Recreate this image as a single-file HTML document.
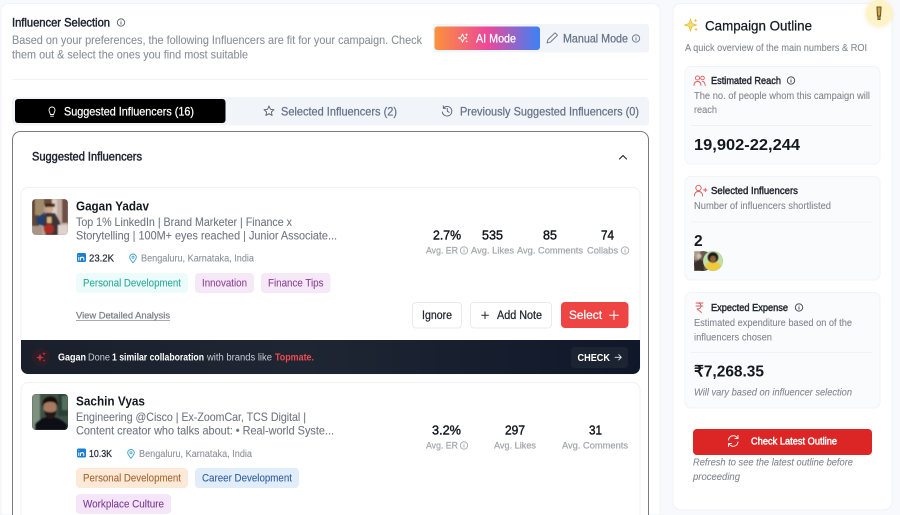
<!DOCTYPE html>
<html><head><meta charset="utf-8"><title>Influencer Selection</title>
<style>
html,body{margin:0;padding:0;width:900px;height:515px;overflow:hidden;background:#f8f9fc}
svg{display:block;filter:blur(.25px)}
text{font-family:"Liberation Sans",sans-serif;white-space:pre}
.m{stroke:currentColor;stroke-width:.25px}
.n{stroke:currentColor;stroke-width:.45px}
.l{stroke:currentColor;stroke-width:.1px}
.b{font-weight:700}
.ic{fill:none;stroke-linecap:round;stroke-linejoin:round}
</style></head><body>
<svg width="900" height="515" viewBox="0 0 900 515" xmlns="http://www.w3.org/2000/svg">
<defs>
<linearGradient id="ai" x1="0" x2="1" y1="0" y2="0"><stop offset="0" stop-color="#fb923c"/><stop offset=".5" stop-color="#ec4899"/><stop offset="1" stop-color="#3b82f6"/></linearGradient>
<linearGradient id="dark" x1="0" x2="1" y1="0" y2="0"><stop offset="0" stop-color="#1a1f2b"/><stop offset=".45" stop-color="#1f2633"/><stop offset="1" stop-color="#0f172a"/></linearGradient>
<filter id="bl" x="-20%" y="-20%" width="140%" height="140%"><feGaussianBlur stdDeviation=".8"/></filter>
<filter id="bl2" x="-20%" y="-20%" width="140%" height="140%"><feGaussianBlur stdDeviation=".4"/></filter>
<filter id="sh" x="-50%" y="-50%" width="200%" height="200%"><feGaussianBlur stdDeviation="2.5"/></filter>
<clipPath id="a1"><rect x="32" y="199" width="36" height="36" rx="4"/></clipPath>
<clipPath id="a2"><rect x="32" y="394" width="36" height="36" rx="4"/></clipPath>
<clipPath id="a3"><rect x="694" y="251" width="19" height="20"/></clipPath>
<clipPath id="a4"><circle cx="713" cy="261" r="9.500"/></clipPath>
<g id="info" class="ic"><circle cx="0" cy="0" r="3.700" stroke-width=".9"/><path d="M0 -.3V1.700M0 -1.600v.1" stroke-width=".9"/></g>
</defs>
<rect width="900" height="515" fill="#f8f9fc"/>

<!-- left panel -->
<path d="M1 515V11.500A8 8 0 0 1 9 3.500H652A8 8 0 0 1 660 11.500V515Z" fill="#fff" stroke="#f1f3f6"/>
<text x="12" y="26.500" font-size="12" class="n" fill="#1c2230" color="#1c2230" textLength="98" lengthAdjust="spacingAndGlyphs">Influencer Selection</text>
<use href="#info" x="121" y="22.500" stroke="#555b66"/>
<text x="12" y="44" font-size="12" class="l" fill="#8b9098" color="#8b9098" textLength="410" lengthAdjust="spacingAndGlyphs">Based on your preferences, the following Influencers are fit for your campaign. Check</text>
<text x="12" y="58.500" font-size="12" class="l" fill="#8b9098" color="#8b9098" textLength="236" lengthAdjust="spacingAndGlyphs">them out &amp; select the ones you find most suitable</text>
<path d="M12 79.500H648" stroke="#f1f2f4"/>

<!-- mode toggle -->
<rect x="433" y="24" width="216" height="28.500" rx="3" fill="#f1f4f9"/>
<rect x="434.500" y="26.500" width="105.500" height="23.500" rx="3" fill="url(#ai)"/>
<g fill="none" stroke="#fff" stroke-width=".9" stroke-linejoin="round"><path d="M462.500 34 463.700 37 466.700 38 463.700 39.200 462.500 42.200 461.300 39.200 458.300 38 461.300 37Z"/></g>
<path d="M466.500 33 467 34.300 468.300 34.800 467 35.300 466.500 36.600 466 35.300 464.700 34.800 466 34.300Z M466.800 40 467.200 41 468.200 41.400 467.200 41.800 466.800 42.800 466.400 41.800 465.400 41.400 466.400 41Z" fill="#fff"/>
<text x="476" y="42.500" font-size="12" class="m" fill="#fff" color="#fff" textLength="40" lengthAdjust="spacingAndGlyphs">AI Mode</text>
<path class="ic" d="M547 43 548 39.500 555 32.800 557.500 35.200 550.500 42Z" stroke="#69717f" stroke-width=".9"/>
<text x="563" y="42.500" font-size="12" class="m" fill="#66738a" color="#66738a" textLength="65" lengthAdjust="spacingAndGlyphs">Manual Mode</text>
<use href="#info" x="636" y="38.500" stroke="#66738a"/>

<!-- tabs -->
<rect x="12" y="97" width="637" height="28.500" rx="4" fill="#f1f4f9"/>
<rect x="15" y="99" width="210.500" height="24" rx="3" fill="#000"/>
<path class="ic" d="M50.300 114.500C50.300 112.800 49 112 49 110 49 108.300 50.400 107 52 107 53.600 107 55 108.300 55 110 55 112 53.700 112.800 53.700 114.500ZM50.600 116.200H53.400" stroke="#fff" stroke-width=".9"/>
<text x="64" y="115.500" font-size="12" class="m" fill="#fff" color="#fff" textLength="130" lengthAdjust="spacingAndGlyphs">Suggested Influencers (16)</text>
<path class="ic" d="M269 106 270.500 109.300 274 109.700 271.400 112 272.100 115.500 269 113.700 265.900 115.500 266.600 112 264 109.700 267.500 109.300Z" stroke="#555e6e" stroke-width=".9"/>
<text x="281" y="115.500" font-size="12" class="m" fill="#66738a" color="#66738a" textLength="116" lengthAdjust="spacingAndGlyphs">Selected Influencers (2)</text>
<path class="ic" d="M443.500 108A4.800 4.800 0 1 1 442.300 112M443.300 105.800V108.300H445.800M447.300 108.500V111.300L449.200 112.300" stroke="#555e6e" stroke-width=".9"/>
<text x="460" y="115.500" font-size="12" class="m" fill="#66738a" color="#66738a" textLength="179" lengthAdjust="spacingAndGlyphs">Previously Suggested Influencers (0)</text>

<!-- outer card -->
<path d="M12.500 515V139.500A8 8 0 0 1 20.500 131.500H640.500A8 8 0 0 1 648.500 139.500V515" fill="#fff" stroke="#7b7b7b"/>
<text x="32" y="160.500" font-size="11.500" class="n" fill="#1c2230" color="#1c2230" textLength="110" lengthAdjust="spacingAndGlyphs">Suggested Influencers</text>
<path class="ic" d="M619.500 159 623 155.500 626.500 159" stroke="#222" stroke-width="1.100"/>

<!-- card 1 -->
<rect x="21" y="187.500" width="619" height="186.500" rx="7" fill="#fff" stroke="#f0f1f3"/>
<g clip-path="url(#a1)">
<rect x="32" y="199" width="36" height="36" fill="#b8a091"/>
<g filter="url(#bl)">
<rect x="32" y="199" width="7" height="36" fill="#5e4636"/>
<rect x="35" y="199" width="9" height="16" fill="#a08a6a"/>
<rect x="44" y="199" width="8" height="6" fill="#6b4a38"/>
<rect x="56" y="199" width="12" height="36" fill="#c4aca0"/>
<rect x="52" y="199" width="5" height="24" fill="#dccfc6"/>
<rect x="62" y="199" width="6" height="24" fill="#6e5046"/>
<circle cx="50" cy="209" r="3.200" fill="#d2a488"/>
<rect x="45" y="203.500" width="10" height="3.500" fill="#3f261c"/>
<path d="M42 219 46 213H55L60 222 62 235H46Z" fill="#3c3236"/>
<path d="M36 218 45 212 44 226 37 224Z" fill="#22406e"/>
<rect x="47" y="217" width="4.500" height="6" fill="#d8b47c"/>
<circle cx="49" cy="229" r="5" fill="#ad2f24"/>
<rect x="32" y="226" width="10" height="9" fill="#a89488"/>
<rect x="58" y="225" width="10" height="10" fill="#ddd3cc"/>
</g></g>
<text x="76" y="210.500" font-size="13" class="b" fill="#15191f" textLength="73" lengthAdjust="spacingAndGlyphs">Gagan Yadav</text>
<text x="76" y="226" font-size="11.800" class="l" fill="#717681" color="#717681" textLength="216" lengthAdjust="spacingAndGlyphs">Top 1% LinkedIn | Brand Marketer | Finance x</text>
<text x="76" y="239.500" font-size="11.800" class="l" fill="#717681" color="#717681" textLength="261" lengthAdjust="spacingAndGlyphs">Storytelling | 100M+ eyes reached | Junior Associate...</text>
<rect x="77" y="253" width="9" height="9" rx="1.500" fill="#1a7fd0"/>
<path d="M78.800 257V260.500M80.500 260.500V257M80.500 258.500C81 256.800 83.600 256.600 83.800 258.500V260.500M78.800 255V255.500" stroke="#fff" stroke-width="1" fill="none"/>
<text x="89" y="261.500" font-size="10.500" class="m" fill="#2a2f38" color="#2a2f38" textLength="25" lengthAdjust="spacingAndGlyphs">23.2K</text>
<path class="ic" d="M133 262.800C131 260.500 129.700 259 129.700 257.300A3.300 3.300 0 0 1 136.300 257.300C136.300 259 135 260.500 133 262.800Z" stroke="#3c9fc9" stroke-width=".9"/><circle cx="133" cy="257.300" r="1.100" fill="none" stroke="#3c9fc9" stroke-width=".8"/>
<text x="141" y="261.500" font-size="10" class="l" fill="#8b9098" color="#8b9098" textLength="113" lengthAdjust="spacingAndGlyphs">Bengaluru, Karnataka, India</text>
<rect x="76" y="273" width="112" height="20" rx="4" fill="#ebfcfa"/>
<text x="83" y="286.500" font-size="10.800" class="l" fill="#2ea99a" color="#2ea99a" textLength="98" lengthAdjust="spacingAndGlyphs">Personal Development</text>
<rect x="195" y="273" width="59" height="20" rx="4" fill="#f6e9f7"/>
<text x="202" y="286.500" font-size="10.800" class="l" fill="#8d4396" color="#8d4396" textLength="45" lengthAdjust="spacingAndGlyphs">Innovation</text>
<rect x="261" y="273" width="69.500" height="20" rx="4" fill="#f6e9f7"/>
<text x="268" y="286.500" font-size="10.800" class="l" fill="#8d4396" color="#8d4396" textLength="55.500" lengthAdjust="spacingAndGlyphs">Finance Tips</text>
<text x="76" y="318.500" font-size="9.500" class="m" fill="#7e8188" color="#7e8188" textLength="94" lengthAdjust="spacingAndGlyphs">View Detailed Analysis</text>
<path d="M76 320.500H170" stroke="#8a8d94" stroke-width=".7"/>

<g font-size="13" class="n" fill="#15191f" color="#15191f">
<text x="433" y="239.500" textLength="28" lengthAdjust="spacingAndGlyphs">2.7%</text>
<text x="482" y="239.500" textLength="21" lengthAdjust="spacingAndGlyphs">535</text>
<text x="543" y="239.500" textLength="14" lengthAdjust="spacingAndGlyphs">85</text>
<text x="601" y="239.500" textLength="13" lengthAdjust="spacingAndGlyphs">74</text>
</g>
<g font-size="9.600" class="m" fill="#a4a7ad" color="#a4a7ad">
<text x="426" y="253.500" textLength="32" lengthAdjust="spacingAndGlyphs">Avg. ER</text>
<text x="471" y="253.500" textLength="43" lengthAdjust="spacingAndGlyphs">Avg. Likes</text>
<text x="517" y="253.500" textLength="66" lengthAdjust="spacingAndGlyphs">Avg. Comments</text>
<text x="587" y="253.500" textLength="31" lengthAdjust="spacingAndGlyphs">Collabs</text>
</g>
<use href="#info" x="464" y="250.500" stroke="#a4a7ad"/>
<use href="#info" x="625" y="250.500" stroke="#a4a7ad"/>

<rect x="412.500" y="302.500" width="49" height="25.500" rx="3.500" fill="#fff" stroke="#e8eaed"/>
<text x="422" y="319" font-size="11.500" class="m" fill="#23272f" color="#23272f" textLength="30" lengthAdjust="spacingAndGlyphs">Ignore</text>
<rect x="470.500" y="302.500" width="81" height="25.500" rx="3.500" fill="#fff" stroke="#e8eaed"/>
<path d="M485 311.500V319M481.300 315.200H488.800" stroke="#23272f" stroke-width="1"/>
<text x="497" y="319" font-size="11.500" class="m" fill="#23272f" color="#23272f" textLength="45" lengthAdjust="spacingAndGlyphs">Add Note</text>
<rect x="561" y="302" width="67.500" height="26" rx="4" fill="#ef4444"/>
<text x="569" y="319" font-size="11.500" class="m" fill="#fff" color="#fff" textLength="33" lengthAdjust="spacingAndGlyphs">Select</text>
<path d="M614 310.500V320M609.200 315.200H618.800" stroke="#fff" stroke-width="1"/>

<!-- banner -->
<path d="M21 340H640V367A7 7 0 0 1 633 374H28A7 7 0 0 1 21 367Z" fill="url(#dark)"/>
<circle cx="41" cy="357" r="9" fill="#2c1e28"/>
<path d="M40 353.500 41 356.500 44 357.500 41 358.500 40 361.500 39 358.500 36 357.500 39 356.500Z M44 352 44.500 353.300 45.800 353.800 44.500 354.300 44 355.600 43.500 354.300 42.200 353.800 43.500 353.300Z M44 359 44.400 360 45.400 360.400 44.400 360.800 44 361.800 43.600 360.800 42.600 360.400 43.600 360Z" fill="#c9343a"/>
<text y="360.500" font-size="9.800" fill="#c9ccd2">
<tspan x="58" class="b" fill="#fff" textLength="28" lengthAdjust="spacingAndGlyphs">Gagan</tspan>
<tspan x="88" textLength="22" lengthAdjust="spacingAndGlyphs">Done</tspan>
<tspan x="112" class="b" fill="#fff" textLength="92" lengthAdjust="spacingAndGlyphs">1 similar collaboration</tspan>
<tspan x="207" textLength="65" lengthAdjust="spacingAndGlyphs">with brands like</tspan>
<tspan x="275" class="b" fill="#ef4a4f" textLength="39" lengthAdjust="spacingAndGlyphs">Topmate.</tspan>
</text>
<rect x="571" y="347" width="57" height="21" rx="3.500" fill="#1c2431"/>
<text x="577.500" y="361" font-size="9.800" class="b" fill="#fff" textLength="32.500" lengthAdjust="spacingAndGlyphs">CHECK</text>
<path class="ic" d="M615 357.300H621.300M618.700 354.700 621.300 357.300 618.700 359.900" stroke="#e8eaee" stroke-width=".9"/>

<!-- card 2 -->
<path d="M21 515V389.500A7 7 0 0 1 28 382.500H633A7 7 0 0 1 640 389.500V515" fill="#fff" stroke="#f0f1f3"/>
<g clip-path="url(#a2)">
<rect x="32" y="394" width="36" height="36" fill="#3f5246"/>
<g filter="url(#bl)">
<rect x="32" y="394" width="8" height="36" fill="#7f8f80"/>
<rect x="58" y="394" width="10" height="22" fill="#2b4034"/>
<rect x="62" y="396" width="6" height="14" fill="#55705c"/>
<path d="M35 430V424C40 418 46 417 50 417 56 417 62 419 67 425V430Z" fill="#0f1114"/>
<ellipse cx="50" cy="408" rx="6.500" ry="9" fill="#a87a62"/>
<path d="M42.500 407C42 399 46 396.500 51 396.500 56 396.500 58.500 401 57.500 407 56 402 53 402 50 402 47 402 44 403 42.500 407Z" fill="#15100f"/>
<path d="M44 410C45 417 48 419 50.500 419 53.500 419 56 416 56.500 410 54 413 47 413 44 410Z" fill="#241917"/>
</g></g>
<text x="76" y="405.500" font-size="13" class="b" fill="#15191f" textLength="69" lengthAdjust="spacingAndGlyphs">Sachin Vyas</text>
<text x="76" y="421" font-size="11.800" class="l" fill="#717681" color="#717681" textLength="230" lengthAdjust="spacingAndGlyphs">Engineering @Cisco | Ex-ZoomCar, TCS Digital |</text>
<text x="76" y="434.500" font-size="11.800" class="l" fill="#717681" color="#717681" textLength="258" lengthAdjust="spacingAndGlyphs">Content creator who talks about: • Real-world Syste...</text>
<rect x="77" y="448.500" width="9" height="9" rx="1.500" fill="#1a7fd0"/>
<path d="M78.800 452.500V456M80.500 456V452.500M80.500 454C81 452.300 83.600 452.100 83.800 454V456M78.800 450.500V451" stroke="#fff" stroke-width="1" fill="none"/>
<text x="89" y="457" font-size="10.500" class="m" fill="#2a2f38" color="#2a2f38" textLength="23" lengthAdjust="spacingAndGlyphs">10.3K</text>
<path class="ic" d="M131 458.300C129 456 127.700 454.500 127.700 452.800A3.300 3.300 0 0 1 134.300 452.800C134.300 454.500 133 456 131 458.300Z" stroke="#3c9fc9" stroke-width=".9"/><circle cx="131" cy="452.800" r="1.100" fill="none" stroke="#3c9fc9" stroke-width=".8"/>
<text x="139" y="457" font-size="10" class="l" fill="#8b9098" color="#8b9098" textLength="113" lengthAdjust="spacingAndGlyphs">Bengaluru, Karnataka, India</text>
<rect x="76" y="468" width="112" height="20" rx="4" fill="#fde9d8"/>
<text x="83" y="481.500" font-size="10.800" class="l" fill="#a8652f" color="#a8652f" textLength="98" lengthAdjust="spacingAndGlyphs">Personal Development</text>
<rect x="195" y="468" width="104" height="20" rx="4" fill="#e2edfb"/>
<text x="202" y="481.500" font-size="10.800" class="l" fill="#2f5f9e" color="#2f5f9e" textLength="90" lengthAdjust="spacingAndGlyphs">Career Development</text>
<rect x="76" y="494" width="95" height="20" rx="4" fill="#f4e6f8"/>
<text x="83" y="507.500" font-size="10.800" class="l" fill="#7a3a93" color="#7a3a93" textLength="81" lengthAdjust="spacingAndGlyphs">Workplace Culture</text>
<g font-size="13" class="n" fill="#15191f" color="#15191f">
<text x="432" y="434.500" textLength="29" lengthAdjust="spacingAndGlyphs">3.2%</text>
<text x="505" y="434.500" textLength="20" lengthAdjust="spacingAndGlyphs">297</text>
<text x="589" y="434.500" textLength="13" lengthAdjust="spacingAndGlyphs">31</text>
</g>
<g font-size="9.600" class="m" fill="#a4a7ad" color="#a4a7ad">
<text x="426" y="448.500" textLength="32" lengthAdjust="spacingAndGlyphs">Avg. ER</text>
<text x="494" y="448.500" textLength="42" lengthAdjust="spacingAndGlyphs">Avg. Likes</text>
<text x="562" y="448.500" textLength="66" lengthAdjust="spacingAndGlyphs">Avg. Comments</text>
</g>
<use href="#info" x="464" y="445.500" stroke="#a4a7ad"/>

<!-- right panel -->
<rect x="673" y="3.500" width="219" height="506.500" rx="8" fill="#fff" stroke="#f0f2f5"/>
<circle cx="879" cy="14" r="14" fill="#f2e6b4" opacity=".55" filter="url(#sh)"/>
<circle cx="879" cy="13" r="13" fill="#fdf3c7"/>
<path d="M877 7H881L880.500 16H877.500ZM878 16.500V19.500H880V16.500" fill="#c9a850" stroke="#6f5a26" stroke-width="1.100"/>
<path d="M690.500 19 692 23.500 696.500 25 692 26.500 690.500 31 689 26.500 684.500 25 689 23.500Z" fill="#f7dd6a" stroke="#e2b93a" stroke-width=".7"/>
<path d="M695.500 18.500 696 20 697.500 20.500 696 21 695.500 22.500 695 21 693.500 20.500 695 20Z M696 27.500 696.500 29 698 29.500 696.500 30 696 31.500 695.500 30 694 29.500 695.500 29Z" fill="#e6bd3c"/>
<text x="705" y="30.500" font-size="14" class="m" fill="#171b22" color="#171b22" textLength="107" lengthAdjust="spacingAndGlyphs">Campaign Outline</text>
<text x="685" y="51" font-size="10.300" class="l" fill="#83878f" color="#83878f" textLength="182" lengthAdjust="spacingAndGlyphs">A quick overview of the main numbers &amp; ROI</text>

<!-- card A -->
<rect x="685" y="66.500" width="195" height="97.500" rx="6" fill="#fafbfd" stroke="#f1f3f6"/>
<g class="ic" stroke="#dc5a5a" stroke-width=".9"><circle cx="697.500" cy="78" r="2.100"/><circle cx="702.500" cy="78" r="1.800"/><path d="M694 85.500C694 82.500 695.500 81.500 697.500 81.500 699.500 81.500 701 82.500 701 85.500M702.500 81.500C704.500 81.500 705 83 705.200 85.500"/></g>
<text x="711" y="84" font-size="10" class="n" fill="#272b33" color="#272b33" textLength="70" lengthAdjust="spacingAndGlyphs">Estimated Reach</text>
<use href="#info" x="791" y="80.500" stroke="#3a3f48"/>
<text x="694" y="99" font-size="9.900" class="l" fill="#83878f" color="#83878f" textLength="176" lengthAdjust="spacingAndGlyphs">The no. of people whom this campaign will</text>
<text x="694" y="113" font-size="9.900" class="l" fill="#83878f" color="#83878f" textLength="23" lengthAdjust="spacingAndGlyphs">reach</text>
<path d="M691 125.500H872" stroke="#f0f1f4"/>
<text x="694" y="150" font-size="15.500" class="b" fill="#141820" textLength="106" lengthAdjust="spacingAndGlyphs">19,902-22,244</text>

<!-- card B -->
<rect x="685" y="176.500" width="195" height="103.500" rx="6" fill="#fafbfd" stroke="#f1f3f6"/>
<g class="ic" stroke="#dc5a5a" stroke-width=".9"><circle cx="698.500" cy="188" r="2.700"/><path d="M694.500 196C694.500 192.800 696.300 191.500 698.500 191.500 700.700 191.500 702.500 192.800 702.500 196M703.500 190H707M705.300 188.300V191.800"/></g>
<text x="711" y="194" font-size="10" class="n" fill="#272b33" color="#272b33" textLength="87" lengthAdjust="spacingAndGlyphs">Selected Influencers</text>
<text x="694" y="209" font-size="9.900" class="l" fill="#83878f" color="#83878f" textLength="137" lengthAdjust="spacingAndGlyphs">Number of influencers shortlisted</text>
<path d="M691 222H872" stroke="#f0f1f4"/>
<text x="694" y="246" font-size="15.500" class="b" fill="#141820">2</text>
<g clip-path="url(#a3)"><circle cx="703" cy="261" r="10" fill="#6b5a50"/><g filter="url(#bl2)"><rect x="694" y="251" width="6" height="9" fill="#a69a86"/><path d="M694 271V263L700 259 704 262V271Z" fill="#3a2e2c"/><circle cx="699" cy="256" r="2.500" fill="#cdbfae"/></g></g>
<circle cx="713" cy="261" r="10" fill="#a7d28f"/>
<g clip-path="url(#a4)"><rect x="703" y="251" width="20" height="20" fill="#bfe0a8"/><g filter="url(#bl2)"><path d="M704 271C704 264 708 262 713 262 718 262 722 264 722 271Z" fill="#f2c83a"/><circle cx="713" cy="257.500" r="5.300" fill="#1d1712"/><ellipse cx="713" cy="259" rx="3" ry="3.300" fill="#8c5e3e"/></g></g>

<!-- card C -->
<rect x="685" y="292.500" width="195" height="115.500" rx="6" fill="#fafbfd" stroke="#f1f3f6"/>
<path class="ic" d="M696 303H703M696 306H703M697 303C700 303 701 304 701 306 701 308 699.500 309 697 309L701.500 312.500" stroke="#dc5a5a" stroke-width=".9"/>
<text x="711" y="311" font-size="10" class="n" fill="#272b33" color="#272b33" textLength="77" lengthAdjust="spacingAndGlyphs">Expected Expense</text>
<use href="#info" x="799" y="307.500" stroke="#3a3f48"/>
<text x="694" y="326" font-size="9.900" class="l" fill="#83878f" color="#83878f" textLength="158" lengthAdjust="spacingAndGlyphs">Estimated expenditure based on of the</text>
<text x="694" y="340.500" font-size="9.900" class="l" fill="#83878f" color="#83878f" textLength="78" lengthAdjust="spacingAndGlyphs">influencers chosen</text>
<path d="M691 352.500H872" stroke="#f0f1f4"/>
<text x="694" y="376.500" font-size="15.500" class="b" fill="#141820" textLength="70" lengthAdjust="spacingAndGlyphs">₹7,268.35</text>
<text x="694" y="395.500" font-size="9.900" font-style="italic" class="l" fill="#83878f" color="#83878f" textLength="158" lengthAdjust="spacingAndGlyphs">Will vary based on influencer selection</text>

<!-- refresh -->
<rect x="693" y="429" width="179" height="26" rx="4" fill="#dc2626"/>
<path class="ic" d="M728.500 440A4.800 4.800 0 0 1 736.800 437.300L738 438.500M738 435.500V438.500H735M738 442A4.800 4.800 0 0 1 729.700 444.700L728.500 443.500M728.500 446.500V443.500H731.500" stroke="#fff" stroke-width=".9"/>
<text x="751" y="444.500" font-size="10" class="n" fill="#fff" color="#fff" textLength="86" lengthAdjust="spacingAndGlyphs">Check Latest Outline</text>
<text x="693" y="465.500" font-size="9.900" font-style="italic" class="l" fill="#83878f" color="#83878f" textLength="160" lengthAdjust="spacingAndGlyphs">Refresh to see the latest outline before</text>
<text x="693" y="480" font-size="9.900" font-style="italic" class="l" fill="#83878f" color="#83878f" textLength="47" lengthAdjust="spacingAndGlyphs">proceeding</text>
</svg>
</body></html>
